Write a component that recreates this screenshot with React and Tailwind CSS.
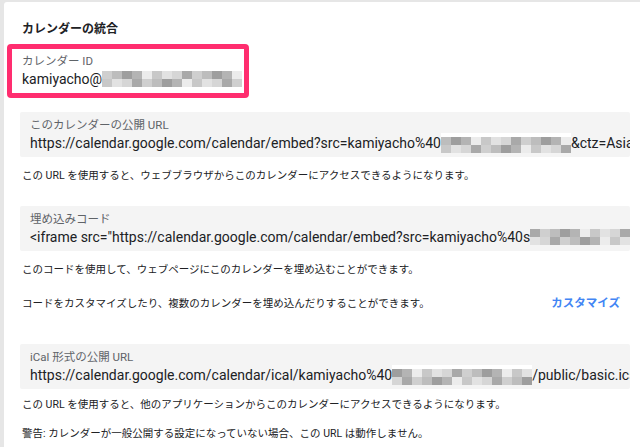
import React from "react";

const font = { fontFamily: 'Roboto, "Noto Sans CJK JP", sans-serif' };

// pixelated mosaic used to hide the private part of the address
function Mosaic({ cols, rows = 2, tile = 10, seed = 1, top = false }) {
  const shades = ["#c8c8c8", "#b4b4b4", "#d6d6d6", "#a9a9a9", "#e2e2e2", "#bdbdbd", "#9e9e9e", "#cfcfcf", "#ececec"];
  const cells = [];
  let s = seed;
  for (let r = 0; r < rows; r++) {
    for (let c = 0; c < cols; c++) {
      s = (s * 9301 + 49297) % 233280;
      cells.push(shades[s % shades.length]);
    }
  }
  return (
    <span className="inline-flex flex-col align-middle shrink-0">
      {top && <span className="block bg-white" style={{ height: 4, width: cols * tile }} />}
      {Array.from({ length: rows }).map((_, r) => (
        <span key={r} className="flex">
          {cells.slice(r * cols, r * cols + cols).map((bg, i) => (
            <span key={i} className="block" style={{ width: tile, height: tile - 2, background: bg }} />
          ))}
        </span>
      ))}
    </span>
  );
}

function Field({ label, children }) {
  return (
    <div className="bg-[#f4f4f4] rounded-[2px] pl-[10px] pt-[6px] pb-[3px] overflow-hidden whitespace-nowrap">
      <div className="text-[11.5px] leading-[14px] text-[#5f6368]">{label}</div>
      <div className="text-[14px] leading-[22px] text-[#202124] flex items-center">{children}</div>
    </div>
  );
}

export default function App() {
  return (
    <div className="w-[640px] h-[447px] bg-[#e6e6e6] pt-[2px] pl-[4px] overflow-hidden" style={font}>
      <div className="bg-white h-full rounded-tl-[3px] pl-[18px] pr-[10px] pt-[18px]">
        <div className="text-[12px] font-semibold text-[#202124] leading-[18px]">カレンダーの統合</div>

        <div className="mt-[6px] -ml-[15px] inline-block border-[5px] border-[#ff2d6f] rounded-[4px] pl-[10px] pr-[8px] pt-[4px] pb-[4px] w-[242px]">
          <div className="text-[11.5px] leading-[16px] text-[#5f6368]">カレンダー ID</div>
          <div className="text-[14px] leading-[20px] text-[#202124] flex items-center whitespace-nowrap">
            kamiyacho@<Mosaic cols={14} tile={10} seed={3} />
          </div>
        </div>

        <div className="mt-[14px] -ml-[2px]">
          <Field label="このカレンダーの公開 URL">
            https://calendar.google.com/calendar/embed?src=kamiyacho%40
            <Mosaic cols={13} tile={10} seed={7} top />
            &amp;ctz=Asia%2FTokyo
          </Field>
        </div>
        <p className="text-[10.5px] leading-[16px] text-[#202124] mt-[11px]">
          この URL を使用すると、ウェブブラウザからこのカレンダーにアクセスできるようになります。
        </p>

        <div className="mt-[22px] -ml-[2px]">
          <Field label="埋め込みコード">
            &lt;iframe src="https://calendar.google.com/calendar/embed?src=kamiyacho%40s
            <Mosaic cols={16} tile={10} seed={11} />
          </Field>
        </div>
        <p className="text-[10.5px] leading-[16px] text-[#202124] mt-[11px]">
          このコードを使用して、ウェブページにこのカレンダーを埋め込むことができます。
        </p>
        <div className="flex items-center justify-between mt-[17px] pr-[10px]">
          <p className="text-[10.5px] leading-[16px] text-[#202124]">
            コードをカスタマイズしたり、複数のカレンダーを埋め込んだりすることができます。
          </p>
          <span className="text-[11.5px] font-bold text-[#4285f4]">カスタマイズ</span>
        </div>

        <div className="mt-[32px] -ml-[2px]">
          <Field label="iCal 形式の公開 URL">
            https://calendar.google.com/calendar/ical/kamiyacho%40
            <Mosaic cols={14} tile={10} seed={5} top />
            /public/basic.ics
          </Field>
        </div>
        <p className="text-[10.5px] leading-[16px] text-[#202124] mt-[8px]">
          この URL を使用すると、他のアプリケーションからこのカレンダーにアクセスできるようになります。
        </p>
        <p className="text-[10.5px] leading-[16px] text-[#202124] mt-[13px]">
          警告: カレンダーが一般公開する設定になっていない場合、この URL は動作しません。
        </p>
      </div>
    </div>
  );
}
